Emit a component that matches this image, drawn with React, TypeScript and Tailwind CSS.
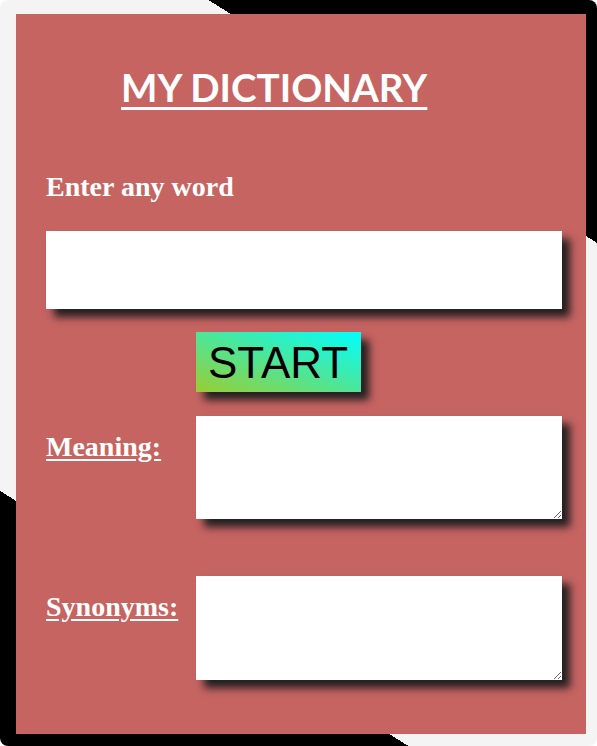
import React from "react";

export default function App() {
  return (
    <div className="w-[597px] h-[746px] bg-white">
      <div className="w-[597px] h-[746px] rounded-lg bg-[linear-gradient(212deg,#000_21.7%,#f4f4f4_21.7%,#f4f4f4_77.2%,#000_77.2%)] pt-[14px] pl-[16px]">
        <div className="w-[570px] h-[720px] bg-[#c66462] flex flex-col pl-[30px]">
          <h1 className="mt-[49px] ml-[75px] text-[38.6px] leading-[48px] font-bold text-white underline decoration-[3px] underline-offset-[5px] font-['Lato',sans-serif]">
            MY DICTIONARY
          </h1>
          <div className="mt-[60px] text-[28px] leading-[32px] font-bold text-white font-['Liberation_Serif',serif]">
            Enter any word
          </div>
          <input
            type="text"
            className="mt-[28px] w-[516px] h-[78px] bg-white shadow-[8px_8px_8px_#231f20] outline-none"
          />
          <button className="mt-[23px] ml-[150px] w-[165px] h-[60px] bg-[linear-gradient(to_top_right,#9acd32,#00ffff)] shadow-[8px_8px_8px_#231f20] text-black text-[44px] leading-none font-['Liberation_Sans',sans-serif] text-left pl-[12px] pt-[1px]">
            START
          </button>
          <div className="mt-[24px] flex">
            <div className="w-[150px] pt-[15px] text-[28px] leading-[32px] font-bold text-white underline underline-offset-[3px] font-['Liberation_Serif',serif]">
              Meaning:
            </div>
            <textarea className="w-[366px] h-[103px] bg-white shadow-[8px_8px_8px_#231f20] outline-none" />
          </div>
          <div className="mt-[57px] flex">
            <div className="w-[150px] pt-[15px] text-[28px] leading-[32px] font-bold text-white underline underline-offset-[3px] font-['Liberation_Serif',serif]">
              Synonyms:
            </div>
            <textarea className="w-[366px] h-[104px] bg-white shadow-[8px_8px_8px_#231f20] outline-none" />
          </div>
        </div>
      </div>
    </div>
  );
}
